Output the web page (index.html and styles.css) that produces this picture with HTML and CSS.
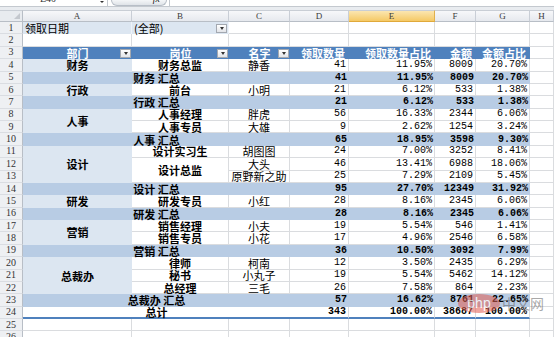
FILE: index.html
```html
<!DOCTYPE html>
<html lang="zh-CN">
<head>
<meta charset="utf-8">
<title>数据透视表</title>
<link rel="stylesheet" href="styles.css">
</head>
<body>
<div class="app">
  <div class="topbar">
    <div class="namebox"><span class="nbtext">E40</span><span class="nbarrow"></span></div>
    <div class="fxbox"><span class="fxtext">fx</span></div>
    <div class="formula"></div>
  </div>
  <div class="band"></div>
  <div class="sheet">
    <div class="corner"></div>
    <div class="ch">A</div><div class="ch">B</div><div class="ch">C</div><div class="ch">D</div>
    <div class="ch sel">E</div><div class="ch">F</div><div class="ch">G</div><div class="ch">H</div>

    <div class="rh">1</div>
    <div class="filt">领取日期</div>
    <div class="filt fv"><span>(全部)</span><span class="dd"></span></div>
    <div class="e"></div><div class="e"></div><div class="e"></div><div class="e"></div><div class="e"></div><div class="e"></div>

    <div class="rh">2</div>
    <div class="e"></div><div class="e"></div><div class="e"></div><div class="e"></div><div class="e"></div><div class="e"></div><div class="e"></div><div class="e"></div>

    <div class="rh">3</div>
    <div class="hd c">部门<span class="dd hdd"></span></div>
    <div class="hd c">岗位<span class="dd hdd"></span></div>
    <div class="hd c">名字<span class="dd hdd"></span></div>
    <div class="hd r">领取数量</div>
    <div class="hd r">领取数量占比</div>
    <div class="hd r">金额</div>
    <div class="hd r">金额占比</div>
    <div class="e"></div>

    <div class="rh">4</div>
    <div class="dept">财务</div><div class="pos">财务总监</div><div class="nm">静香</div>
    <div class="n">41</div><div class="n">11.95%</div><div class="n">8009</div><div class="n">20.70%</div><div class="e"></div>

    <div class="rh">5</div>
    <div class="sub">财务 汇总</div>
    <div class="sn">41</div><div class="sn">11.95%</div><div class="sn">8009</div><div class="sn">20.70%</div><div class="e"></div>

    <div class="rh">6</div>
    <div class="dept">行政</div><div class="pos">前台</div><div class="nm">小明</div>
    <div class="n">21</div><div class="n">6.12%</div><div class="n">533</div><div class="n">1.38%</div><div class="e"></div>

    <div class="rh">7</div>
    <div class="sub">行政 汇总</div>
    <div class="sn">21</div><div class="sn">6.12%</div><div class="sn">533</div><div class="sn">1.38%</div><div class="e"></div>

    <div class="rh">8</div>
    <div class="dept r2">人事</div><div class="pos">人事经理</div><div class="nm">胖虎</div>
    <div class="n">56</div><div class="n">16.33%</div><div class="n">2344</div><div class="n">6.06%</div><div class="e"></div>

    <div class="rh">9</div>
    <div class="pos">人事专员</div><div class="nm">大雄</div>
    <div class="n">9</div><div class="n">2.62%</div><div class="n">1254</div><div class="n">3.24%</div><div class="e"></div>

    <div class="rh">10</div>
    <div class="sub">人事 汇总</div>
    <div class="sn">65</div><div class="sn">18.95%</div><div class="sn">3598</div><div class="sn">9.30%</div><div class="e"></div>

    <div class="rh">11</div>
    <div class="dept r3">设计</div><div class="pos">设计实习生</div><div class="nm">胡图图</div>
    <div class="n">24</div><div class="n">7.00%</div><div class="n">3252</div><div class="n">8.41%</div><div class="e"></div>

    <div class="rh">12</div>
    <div class="pos r2">设计总监</div><div class="nm">大头</div>
    <div class="n">46</div><div class="n">13.41%</div><div class="n">6988</div><div class="n">18.06%</div><div class="e"></div>

    <div class="rh">13</div>
    <div class="nm">原野新之助</div>
    <div class="n">25</div><div class="n">7.29%</div><div class="n">2109</div><div class="n">5.45%</div><div class="e"></div>

    <div class="rh">14</div>
    <div class="sub">设计 汇总</div>
    <div class="sn">95</div><div class="sn">27.70%</div><div class="sn">12349</div><div class="sn">31.92%</div><div class="e"></div>

    <div class="rh">15</div>
    <div class="dept">研发</div><div class="pos">研发专员</div><div class="nm">小红</div>
    <div class="n">28</div><div class="n">8.16%</div><div class="n">2345</div><div class="n">6.06%</div><div class="e"></div>

    <div class="rh">16</div>
    <div class="sub">研发 汇总</div>
    <div class="sn">28</div><div class="sn">8.16%</div><div class="sn">2345</div><div class="sn">6.06%</div><div class="e"></div>

    <div class="rh">17</div>
    <div class="dept r2">营销</div><div class="pos">销售经理</div><div class="nm">小夫</div>
    <div class="n">19</div><div class="n">5.54%</div><div class="n">546</div><div class="n">1.41%</div><div class="e"></div>

    <div class="rh">18</div>
    <div class="pos">销售专员</div><div class="nm">小花</div>
    <div class="n">17</div><div class="n">4.96%</div><div class="n">2546</div><div class="n">6.58%</div><div class="e"></div>

    <div class="rh">19</div>
    <div class="sub">营销 汇总</div>
    <div class="sn">36</div><div class="sn">10.50%</div><div class="sn">3092</div><div class="sn">7.99%</div><div class="e"></div>

    <div class="rh">20</div>
    <div class="dept r3">总裁办</div><div class="pos">律师</div><div class="nm">柯南</div>
    <div class="n">12</div><div class="n">3.50%</div><div class="n">2435</div><div class="n">6.29%</div><div class="e"></div>

    <div class="rh">21</div>
    <div class="pos">秘书</div><div class="nm">小丸子</div>
    <div class="n">19</div><div class="n">5.54%</div><div class="n">5462</div><div class="n">14.12%</div><div class="e"></div>

    <div class="rh">22</div>
    <div class="pos">总经理</div><div class="nm">三毛</div>
    <div class="n">26</div><div class="n">7.58%</div><div class="n">864</div><div class="n">2.23%</div><div class="e"></div>

    <div class="rh">23</div>
    <div class="sub">总裁办 汇总</div>
    <div class="sn">57</div><div class="sn">16.62%</div><div class="sn">8761</div><div class="sn">22.65%</div><div class="e"></div>

    <div class="rh">24</div>
    <div class="tot">总计</div>
    <div class="tn">343</div><div class="tn">100.00%</div><div class="tn">38687</div><div class="tn">100.00%</div><div class="e"></div>

    <div class="rh">25</div>
    <div class="e"></div><div class="e"></div><div class="e"></div><div class="e"></div><div class="e"></div><div class="e"></div><div class="e"></div><div class="e"></div>

    <div class="rh">26</div>
    <div class="e"></div><div class="e"></div><div class="e"></div><div class="e"></div><div class="e"></div><div class="e"></div><div class="e"></div><div class="e"></div>
  </div>
  <div class="watermark"><span class="wm-php">php</span><span class="wm-cn">中文网</span></div>
</div>
</body>
</html>
```
FILE: styles.css
```css
html, body {
  margin: 0;
  padding: 0;
  background: #ffffff;
}
.app {
  width: 554px;
  height: 337px;
  overflow: hidden;
  position: relative;
  font-family: "Noto Sans CJK SC", "Liberation Sans", sans-serif;
  font-size: 11px;
  color: #000;
}
.topbar {
  height: 6px;
  display: flex;
  background: #fff;
  border-bottom: 1px solid #c4c9cf;
}
.namebox {
  width: 108px;
  display: flex;
  justify-content: space-between;
  overflow: hidden;
  border-right: 1px solid #c4c9cf;
  box-sizing: border-box;
}
.nbtext {
  margin-left: 40px;
  margin-top: -6px;
  font-family: "Liberation Serif", serif;
  font-size: 10px;
  line-height: 10px;
  color: #333;
}
.nbarrow {
  width: 0;
  height: 0;
  margin: 1px 3px 0 0;
  border-left: 2px solid transparent;
  border-right: 2px solid transparent;
  border-top: 2px solid #333;
}
.fxbox {
  width: 56px;
  margin-left: 3px;
  background: linear-gradient(#f4f6f8, #dfe3e8);
  border: 1px solid #b7bec7;
  border-top: none;
  border-radius: 0 0 7px 7px;
  display: flex;
  justify-content: flex-end;
  overflow: hidden;
  box-sizing: border-box;
}
.fxtext {
  margin-right: 6px;
  margin-top: -6px;
  font-family: "Liberation Serif", serif;
  font-style: italic;
  font-size: 10px;
  line-height: 10px;
  color: #222;
}
.formula {
  flex: 1;
  margin-left: 2px;
  border-left: 1px solid #c4c9cf;
}
.band {
  height: 3px;
  background: #e9ecf0;
}
.sheet {
  display: grid;
  grid-template-columns: 23px 109px 97px 61px 59px 86px 41px 54px 24px;
  grid-template-rows: 12px;
  grid-auto-rows: 12.375px;
}
.sheet > div {
  box-sizing: border-box;
  display: flex;
  align-items: center;
  white-space: nowrap;
  overflow: visible;
  line-height: 12px;
}
.corner {
  background: #e8ebef;
  border-right: 1px solid #b8bec6;
  border-bottom: 1px solid #b8bec6;
  border-top: 1px solid #c9ced5;
  position: relative;
}
.corner::after {
  content: "";
  position: absolute;
  right: 2px;
  bottom: 2px;
  width: 0;
  height: 0;
  border-left: 6px solid transparent;
  border-bottom: 6px solid #c4c8ce;
}
.ch {
  justify-content: center;
  background: linear-gradient(#f7f8fa, #e6e9ee);
  border-right: 1px solid #c9ced6;
  border-bottom: 1px solid #b8bec6;
  border-top: 1px solid #c9ced5;
  font-family: "Liberation Serif", serif;
  font-size: 9px;
  color: #3c3c3c;
}
.ch.sel {
  background: linear-gradient(#fbe6b1, #f5c965);
  border-right: 1px solid #e0b04d;
  border-bottom: 1px solid #e0a93a;
}
.rh {
  justify-content: center;
  background: #eef0f3;
  border-right: 1px solid #b8bec6;
  border-bottom: 1px solid #dadde2;
  font-family: "Liberation Serif", serif;
  font-size: 10px;
  color: #333;
}
.e {
  border-right: 1px solid #dadcdf;
  border-bottom: 1px solid #dadcdf;
}
.filt {
  background: #dce6f1;
  padding-left: 2px;
  border-right: 1px solid #eef3f9;
}
.fv {
  justify-content: space-between;
  padding-right: 1px;
}
.dd {
  width: 11px;
  height: 9px;
  box-sizing: border-box;
  background: linear-gradient(#ffffff, #e2e4e8);
  border: 1px solid #a3a8b0;
  display: flex;
  align-items: center;
  justify-content: center;
}
.dd::after {
  content: "";
  width: 0;
  height: 0;
  border-left: 2.5px solid transparent;
  border-right: 2.5px solid transparent;
  border-top: 3px solid #333;
}
.hd {
  background: #4f81bd;
  color: #fff;
  font-weight: 700;
  position: relative;
}
.hd.c {
  justify-content: center;
}
.hd.r {
  justify-content: flex-end;
  padding-right: 4px;
}
.hdd {
  position: absolute;
  right: 1px;
  top: 2px;
}
.dept {
  background: #dce6f1;
  justify-content: center;
  font-weight: 700;
}
.r2 {
  grid-row: span 2;
}
.r3 {
  grid-row: span 3;
}
.pos {
  justify-content: center;
  font-weight: 700;
  border-right: 1px solid #dadcdf;
  border-bottom: 1px solid #dadcdf;
}
.nm {
  justify-content: center;
  border-right: 1px solid #dadcdf;
  border-bottom: 1px solid #dadcdf;
}
.n, .sn, .tn {
  justify-content: flex-end;
  padding-right: 2px;
  font-family: "Liberation Mono", monospace;
  font-size: 10px;
}
.n {
  border-right: 1px solid #dadcdf;
  border-bottom: 1px solid #dadcdf;
}
.sub {
  grid-column: span 3;
  justify-content: center;
  background: #b8cce4;
  font-weight: 700;
}
.sn {
  background: #b8cce4;
  font-weight: 700;
}
.tot {
  grid-column: span 3;
  justify-content: center;
  font-weight: 700;
  border-bottom: 2px solid #4f81bd;
}
.tn {
  font-weight: 700;
  border-right: 1px solid #dadcdf;
  border-bottom: 2px solid #4f81bd;
}
.watermark {
  position: absolute;
  left: 458px;
  top: 294px;
  display: flex;
  align-items: center;
  gap: 2px;
  opacity: 0.75;
}
.wm-php {
  width: 42px;
  height: 19px;
  border-radius: 50%;
  background: rgba(226, 96, 84, 0.75);
  color: #fff;
  font-family: "Liberation Sans", sans-serif;
  font-size: 14px;
  line-height: 19px;
  text-align: center;
}
.wm-cn {
  font-family: "Noto Sans CJK SC", sans-serif;
  font-size: 14px;
  line-height: 19px;
  color: rgba(90, 90, 90, 0.7);
}
```
